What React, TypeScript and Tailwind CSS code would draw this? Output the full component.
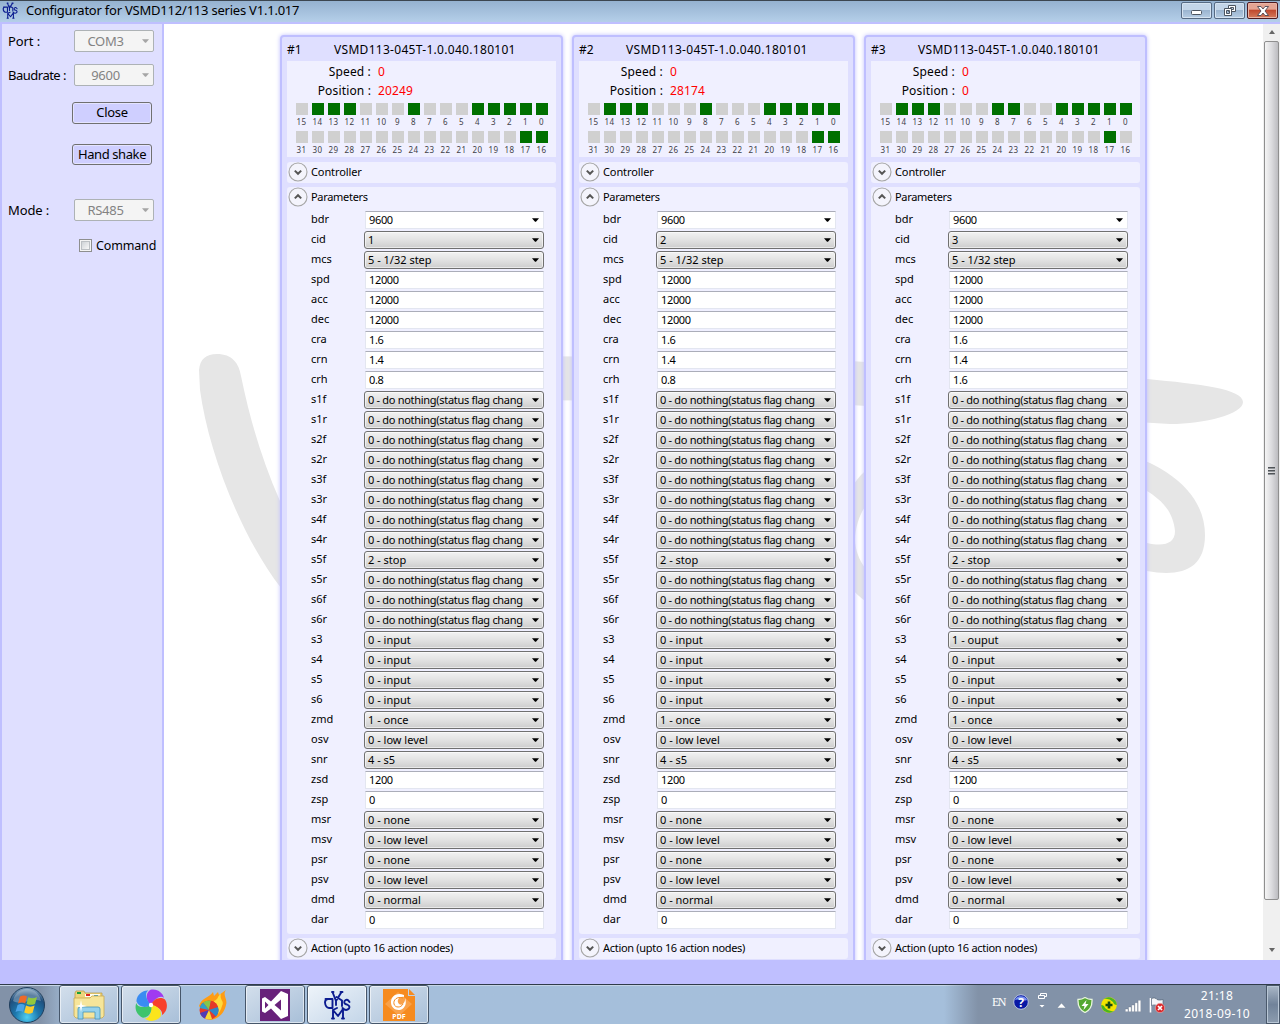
import React from 'react';

type Field = { name: string; values: [string, string, string]; kind: 'input' | 'select' | 'edit' };

const same = (v: string): [string, string, string] => [v, v, v];
const nothing = '0 - do nothing(status flag chang';
const f = (name: string, kind: Field['kind'], ...v: string[]): Field => ({
  name,
  kind,
  values: v.length === 3 ? [v[0], v[1], v[2]] : same(v[0]),
});

const fields: Field[] = [
  f('bdr', 'edit', '9600'),
  f('cid', 'select', '1', '2', '3'),
  f('mcs', 'select', '5 - 1/32 step'),
  f('spd', 'input', '12000'),
  f('acc', 'input', '12000'),
  f('dec', 'input', '12000'),
  f('cra', 'input', '1.6'),
  f('crn', 'input', '1.4'),
  f('crh', 'input', '0.8', '0.8', '1.6'),
  f('s1f', 'select', nothing),
  f('s1r', 'select', nothing),
  f('s2f', 'select', nothing),
  f('s2r', 'select', nothing),
  f('s3f', 'select', nothing),
  f('s3r', 'select', nothing),
  f('s4f', 'select', nothing),
  f('s4r', 'select', nothing),
  f('s5f', 'select', '2 - stop'),
  f('s5r', 'select', nothing),
  f('s6f', 'select', nothing),
  f('s6r', 'select', nothing),
  f('s3', 'select', '0 - input', '0 - input', '1 - ouput'),
  f('s4', 'select', '0 - input'),
  f('s5', 'select', '0 - input'),
  f('s6', 'select', '0 - input'),
  f('zmd', 'select', '1 - once'),
  f('osv', 'select', '0 - low level'),
  f('snr', 'select', '4 - s5'),
  f('zsd', 'input', '1200'),
  f('zsp', 'input', '0'),
  f('msr', 'select', '0 - none'),
  f('msv', 'select', '0 - low level'),
  f('psr', 'select', '0 - none'),
  f('psv', 'select', '0 - low level'),
  f('dmd', 'select', '0 - normal'),
  f('dar', 'input', '0'),
];

const devices = [
  { position: '20249', on: [14, 13, 12, 8, 4, 3, 2, 1, 0, 17, 16] },
  { position: '28174', on: [14, 13, 12, 8, 4, 3, 2, 1, 0, 17, 16] },
  { position: '0', on: [14, 13, 12, 8, 7, 4, 3, 2, 1, 0, 17] },
];

function DownTriangle({ className }: { className: string }) {
  return (
    <svg viewBox="0 0 8 4" className={className}>
      <path d="M0 0H8L4.5 4H3.5Z" fill="currentColor" />
    </svg>
  );
}

function Logo({ className }: { className: string }) {
  return (
    <svg viewBox="-1 -1 28 30" className={className} fill="none" stroke="#0c1c90" strokeWidth="1.9" strokeLinecap="round" strokeLinejoin="round">
      <path d="M8.500 8H4Q1 8 1 11.500Q1.500 16.500 5 17H8.500V8M3 8H1.500" />
      <path d="M8.500 1L12 10L17.500 1M8 1H9.500M16.500 1H18.500M12.500 6L18 9.500V15M12 10V14" />
      <path d="M9 27.500V19L14 25L19 18V27.500M8 27.500H10M18 27.500H20M9 19L13 17" />
      <path d="M25.500 11Q23 7 20.500 10Q19.500 13 23 13.500Q26.500 15 25 17.500Q22 20.500 18.500 17" />
    </svg>
  );
}

function BitRow({ start, on }: { start: number; on: number[] }) {
  return (
    <div className="flex h-7 gap-1">
      {Array.from({ length: 16 }, (_, i) => start - i).map((n) => (
        <div key={n} className="flex w-3 flex-col items-center">
          <div className={`h-3 w-3 shrink-0 ${on.includes(n) ? 'bg-[#007000]' : 'bg-[#d0d0d0]'}`} />
          <span className="mt-px text-[8px] leading-3 tracking-[0.3px] text-[#404048]">{n}</span>
        </div>
      ))}
    </div>
  );
}

function ExpanderHeader({ label, open, tight }: { label: string; open?: boolean; tight?: boolean }) {
  return (
    <div className="flex h-[21px] items-center">
      <svg viewBox="0 0 20 20" className="-mt-[5px] -mb-1 ml-px h-5 w-5 shrink-0" fill="none">
        <circle cx="10" cy="10" r="9" fill="#f4f4fc" stroke="#a6a6a6" strokeWidth="1.1" />
        <path d={open ? 'M6.8 11.4L10 8.2L13.2 11.4' : 'M6.8 8.6L10 11.8L13.2 8.6'} stroke="#555" strokeWidth="2" />
      </svg>
      <span className={`ml-[3px] text-[11px] ${tight ? 'tracking-[-0.3px]' : 'tracking-[-0.1px]'}`}>{label}</span>
    </div>
  );
}

function FieldBox({ kind, value }: { kind: Field['kind']; value: string }) {
  if (kind === 'select') {
    return (
      <div className="flex h-[18px] w-[180px] items-center justify-between rounded-[3px] border border-[#707070] bg-linear-to-b from-[#f2f2f2] from-0% via-[#e2e2e2] via-50% to-[#cdcdcd] pr-1 pl-[3px] shadow-[inset_0_0_0_1px_#ffffff90]">
        <span className={`text-[11px] leading-4 whitespace-nowrap ${value.length > 20 ? 'tracking-[-0.3px]' : ''}`}>{value}</span>
        <DownTriangle className="h-1 w-[7px] shrink-0" />
      </div>
    );
  }
  return (
    <div className="ml-px flex h-[18px] w-[179px] items-center justify-between border border-[#e3e6f0] border-t-[#abadb9] bg-white pr-1 pl-[3px]">
      <span className="text-[11px] leading-4 tracking-[-0.35px]">{value}</span>
      {kind === 'edit' && <DownTriangle className="h-1 w-[7px]" />}
    </div>
  );
}

function DevicePanel({ index }: { index: number }) {
  const d = devices[index];
  return (
    <section className="h-[940px] w-[283px] shrink-0 rounded-t-[4px] border-2 border-[#bfbfff] bg-[#dfdfff] px-[5px] shadow-[0_0_4px_#bfbfff]">
      <div className="flex h-6 items-center pt-[2px] text-[12px]">
        <span className="w-[47px]">#{index + 1}</span>
        <span className="tracking-[0.3px] whitespace-nowrap">VSMD113-045T-1.0.040.180101</span>
      </div>
      <div className="h-24 bg-[#f0f0ff]">
        <div className="grid grid-cols-[84px_1fr] gap-x-[7px] pt-px text-[12px] leading-[19px] tracking-[0.15px]">
          <span className="text-right">Speed :</span>
          <span className="text-[#ff0000]">0</span>
          <span className="text-right">Position :</span>
          <span className="text-[#ff0000]">{d.position}</span>
        </div>
        <div className="mt-[3px] ml-[8.5px]">
          <BitRow start={15} on={d.on} />
          <BitRow start={31} on={d.on} />
        </div>
      </div>
      <div className="mt-[5px] rounded-[3px] bg-[#f0f0ff]">
        <ExpanderHeader label="Controller" />
      </div>
      <div className="mt-1 h-[747px] rounded-[3px] bg-[#f0f0ff]">
        <ExpanderHeader label="Parameters" open tight />
        <div className="mt-[2px]">
          {fields.map((field) => (
            <div key={field.name} className="flex h-5 items-center">
              <span className="ml-6 w-[53px] pb-[2px] text-[11px] leading-4">{field.name}</span>
              <FieldBox kind={field.kind} value={field.values[index]} />
            </div>
          ))}
        </div>
      </div>
      <div className="mt-1 rounded-[3px] bg-[#f0f0ff]">
        <ExpanderHeader label="Action (upto 16 action nodes)" tight />
      </div>
    </section>
  );
}

function DisabledSelect({ value }: { value: string }) {
  return (
    <div className="flex h-[22px] w-20 items-center rounded-[2px] border border-[#adb2b5] bg-[#f4f4f4] text-[13px] text-[#838383]">
      <span className="w-[61px] pt-px text-center tracking-[-0.3px]">{value}</span>
      <DownTriangle className="ml-[6px] h-1 w-[7px] text-[#a5a5a5]" />
    </div>
  );
}

function Sidebar() {
  return (
    <aside className="h-[936px] w-[164px] shrink-0 border-x-2 border-[#bfbfff] bg-[#dfdfff] text-[13px]">
      <div className="mt-[6px] flex h-[22px] items-center">
        <span className="w-[72px] pt-[2px] pl-[6px] tracking-[-0.1px]">Port :</span>
        <DisabledSelect value="COM3" />
      </div>
      <div className="mt-3 flex h-[22px] items-center">
        <span className="w-[72px] pt-[2px] pl-[6px] tracking-[-0.5px] whitespace-nowrap">Baudrate :</span>
        <DisabledSelect value="9600" />
      </div>
      <button className="mt-4 ml-[70px] flex h-[22px] w-20 items-center justify-center rounded-[3px] border border-[#707070] bg-[#cfcfff] tracking-[-0.3px] shadow-[inset_0_0_0_1px_#e4e4ff]">Close</button>
      <button className="mt-5 ml-[70px] flex h-[21px] w-20 items-center justify-center rounded-[3px] border border-[#707070] bg-[#cfcfff] pt-px tracking-[-0.4px] whitespace-nowrap shadow-[inset_0_0_0_1px_#e4e4ff]">Hand shake</button>
      <div className="mt-[34px] flex h-[22px] items-center">
        <span className="w-[72px] pt-[2px] pl-[6px] tracking-[-0.1px]">Mode :</span>
        <DisabledSelect value="RS485" />
      </div>
      <div className="mt-[14px] ml-[77px] flex h-5 items-center">
        <span className="h-[13px] w-[13px] border border-[#8e8f8f] bg-[#f4f4f4] p-px">
          <span className="block h-full w-full border border-[#bcc0c4] bg-linear-to-br from-[#cfd3d7] to-[#f8f8f8]" />
        </span>
        <span className="ml-1 pt-[2px] text-[12.5px] tracking-[-0.15px]">Command</span>
      </div>
    </aside>
  );
}

function Watermark() {
  return (
    <svg viewBox="164 24 1099 936" className="absolute inset-0 h-full w-full" fill="#e6e6e6">
      <path d="M199 370C200 359 206 354 217 354C232 354 239 363 241 376C250 420 262 460 280 501L300 540V612L281 588C240 535 208 450 200 390Z" />
      <path d="M500 356L800 358L1147 379C1200 384 1243 389 1243 402C1243 414 1205 424 1170 424L800 402L500 400Z" />
      <path fillRule="evenodd" d="M900 455C868 458 838 490 838 540C838 580 856 606 900 615ZM900 480C872 490 856 512 855 540C856 560 868 580 900 590Z" />
      <path d="M1100 446C1170 462 1205 495 1205 535C1205 570 1180 577 1147 571L1100 555V530L1147 543C1165 547 1175 543 1175 531C1173 510 1160 499 1147 491L1100 476Z" />
    </svg>
  );
}

function Scrollbar() {
  return (
    <div className="flex h-full w-[17px] shrink-0 flex-col items-center bg-[#f0f0f0]">
      <svg viewBox="0 0 6 4" className="mt-[6px] h-1 w-[6px] shrink-0"><path d="M0 4L3 0L6 4Z" fill="#666" /></svg>
      <div className="mt-[7px] flex h-[859px] w-[15px] shrink-0 flex-col items-center justify-center gap-[2px] rounded-[2px] border border-[#8f8f8f] bg-linear-to-r from-[#f5f5f5] via-[#dcdcdf] to-[#bcbcc0]">
        {[0, 1, 2].map((i) => (
          <span key={i} className="h-px w-[7px] bg-[#505458] shadow-[0_1px_0_#909498]" />
        ))}
      </div>
      <svg viewBox="0 0 6 4" className="mt-12 h-1 w-[6px] shrink-0"><path d="M0 0L3 4L6 0Z" fill="#666" /></svg>
    </div>
  );
}

function TitleBar() {
  const btn = 'flex h-[17px] w-[31px] items-center justify-center rounded-[2px] border border-[#566a83] bg-linear-to-b from-[#c3d5e8] from-45% via-[#9bb5d0] via-50% to-[#b6cde4] shadow-[inset_0_0_0_1px_#d5e3f1]';
  return (
    <header className="flex h-[22px] items-start border-t border-[#3c4650] bg-linear-to-b from-[#95b2d0] to-[#b5cfe9]">
      <Logo className="mt-[1px] ml-[2px] h-[17px] w-[16px]" />
      <span className="ml-2 text-[13px] leading-[18px] tracking-[-0.22px]">Configurator for VSMD112/113 series V1.1.017</span>
      <div className="mt-px mr-[2px] ml-auto flex gap-[2px]">
        <span className={btn}>
          <svg viewBox="0 0 11 5" className="mt-1 h-[5px] w-[11px]"><rect x=".5" y=".5" width="10" height="4" rx="1" fill="#fff" stroke="#4c5560" /></svg>
        </span>
        <span className={btn}>
          <svg viewBox="0 0 12 11" className="h-[11px] w-3" fill="#fff" stroke="#4c5560">
            <path fillRule="evenodd" d="M4.5 .5H11.5V6.5H4.5ZM6.5 2.5H9.5V4.5H6.5Z" />
            <path fillRule="evenodd" d="M.5 3.5H7.5V10.5H.5ZM2.5 5.5H5.5V8.5H2.5Z" />
          </svg>
        </span>
        <span className="flex h-[17px] w-[31px] items-center justify-center rounded-[2px] border border-[#4f1a20] bg-linear-to-b from-[#e4a493] from-40% via-[#c04a30] via-50% to-[#d47a5c] shadow-[inset_0_0_0_1px_#e9b4a5]">
          <svg viewBox="0 0 12 10" className="h-[10px] w-3"><path d="M.5 .5H4L6 3L8 .5H11.5L8 5L11.5 9.5H8L6 7L4 9.5H.5L4 5Z" fill="#fff" stroke="#4c4550" strokeWidth=".9" /></svg>
        </span>
      </div>
    </header>
  );
}

function TaskButton({ children, active, plain }: { children: React.ReactNode; active?: boolean; plain?: boolean }) {
  const look = plain
    ? 'border-transparent'
    : active
      ? 'border-[#46566a] bg-linear-to-br from-[#eef4fa] to-[#c3d5e8] shadow-[inset_0_0_0_1px_#ffffffb0]'
      : 'border-[#46566a] bg-linear-to-br from-[#d3dfec] to-[#a8bfd8] shadow-[inset_0_0_0_1px_#ffffff90]';
  return <div className={`flex h-[39px] w-[60px] items-center justify-center rounded-[3px] border ${look}`}>{children}</div>;
}

function StartOrb() {
  return (
    <svg viewBox="0 0 38 38" className="ml-2 h-[38px] w-[38px] shrink-0">
      <defs>
        <radialGradient id="orb" cx=".5" cy=".85" r=".85">
          <stop offset="0" stopColor="#4fd0f4" />
          <stop offset=".4" stopColor="#1d78ad" />
          <stop offset=".75" stopColor="#1f4f7d" />
          <stop offset="1" stopColor="#8aa9c4" />
        </radialGradient>
      </defs>
      <circle cx="19" cy="19" r="17.5" fill="url(#orb)" stroke="#203e5c" />
      <path d="M5 15C7 5 15 3 19 3S31 5 33 15C24 11 14 20 5 15Z" fill="#fff" opacity=".28" />
      <path d="M12 10.5C14.500 9 17 9 19 10.500L17.200 17.500C15 16 12.500 16 10 17.500Z" fill="#ee6a28" />
      <path d="M20.300 11.300C23 12.500 26 12.500 29 11L27 18C24 19.300 21 19 18.500 18Z" fill="#92c83e" />
      <path d="M9.600 19C12 17.500 14.800 17.800 16.800 19L15 26C12.800 24.500 10 24.500 7.500 26Z" fill="#4aa3e6" />
      <path d="M18 19.600C20.700 21 23.700 21 26.600 19.500L24.600 26.700C21.800 28 18.800 28 16.200 26.500Z" fill="#fccb2b" />
    </svg>
  );
}

function Taskbar() {
  const petals = ['#a03af0', '#f8402c', '#fbe51c', '#3ec46c', '#3a8cf2'];
  return (
    <footer className="flex h-10 items-center border-t border-[#303c4a] bg-linear-to-r from-[#8292a8] from-[40px] to-[#a5bfdb] to-[72px] text-white shadow-[inset_0_1px_0_#c5d5e6]">
      <StartOrb />
      <div className="ml-[13px] flex gap-[2px]">
        <TaskButton>
          <svg viewBox="0 0 32 30" className="h-[30px] w-8">
            <path d="M2 3L3 1H11L12 3H29V10H2Z" fill="#eed47c" stroke="#b99840" strokeWidth=".7" />
            <path d="M4 2H8V4H4Z" fill="#18a038" /><path d="M12 4H27V7H12Z" fill="#fffef0" />
            <path d="M13 4H17V6H13Z" fill="#d22" /><path d="M21 5H25V7H21Z" fill="#39c" />
            <path d="M1 8H17L19 6H31V26L29 28H3L1 26Z" fill="#f6e59a" stroke="#c8a850" strokeWidth=".8" />
            <path d="M5 29V19Q5 17 7 17H25Q27 17 27 19V29H22V22H10V29Z" fill="#96d2ec" stroke="#4495bd" strokeWidth=".8" />
            <path d="M8 10L9 15L14 16L9 17L8 22L7 17L2 16L7 15Z" fill="#fff" />
          </svg>
        </TaskButton>
        <TaskButton>
          <svg viewBox="-16 -16 32 32" className="h-8 w-8">
            {petals.map((c, i) => (
              <path key={c} d="M0 0C-5 -4 -6 -11 -1 -15C6 -17 12 -12 13 -7C10 -10 4 -7 0 0Z" fill={c} transform={`rotate(${i * 72})`} />
            ))}
            <circle r="2.200" fill="#fff" />
          </svg>
        </TaskButton>
        <TaskButton plain>
          <svg viewBox="0 0 32 32" className="h-8 w-8">
            <path d="M2 17C5 8 12 9 16 3L17 7L21 3L22 6L29 1C25 6 31 10 29 16C27 25 21 30 13 31Z" fill="#ff9c13" />
            <path d="M17 12C22 10 20 7 24 5C22 11 28 12 25 17C24 21 22 24 20 26Z" fill="#ffdb3d" />
            <circle cx="12" cy="21" r="9.500" fill="#e53928" />
            <path d="M12 21L6 13.600A9.500 9.500 0 0 1 14 11.700Z" fill="#85c64a" />
            <path d="M12 21L14 11.700A9.500 9.500 0 0 1 21 18Z" fill="#e53928" />
            <path d="M12 21L21 18A9.500 9.500 0 0 1 19 27.500Z" fill="#2f86c8" />
            <path d="M12 21L2.700 19A9.500 9.500 0 0 1 6 13.600Z" fill="#2fa0c8" />
            <path d="M12 21L8 29.600A9.500 9.500 0 0 1 3 24Z" fill="#4e3bb5" />
            <path d="M12 21L15 30A9.500 9.500 0 0 1 8 29.600Z" fill="#f6d735" />
          </svg>
        </TaskButton>
        <TaskButton>
          <svg viewBox="0 0 30 32" className="h-8 w-[30px]">
            <rect width="30" height="32" fill="#68217a" />
            <path fillRule="evenodd" d="M21 2L28 5V27L21 30L11 19.500L5 24L2 22.500V9.500L5 8L11 12.500ZM21 10.500L14.500 16L21 21.500ZM5 12.500V19.500L8.500 16Z" fill="#fff" />
          </svg>
        </TaskButton>
        <TaskButton active>
          <Logo className="h-[30px] w-7" />
        </TaskButton>
        <TaskButton>
          <svg viewBox="0 0 32 32" className="h-8 w-8">
            <path d="M0 0H25V7H32V32H0Z" fill="#f68b1f" /><path d="M26 0L32 6H26Z" fill="#f68b1f" />
            <path d="M2 15L15 3L29 15L16 27Z" fill="#fbb165" opacity=".6" />
            <path d="M21 6C13 3 7.500 8 8 14C8.500 20 15 23 20 19.500C23 17 23.500 13 22 9C22.500 14 19 17 16 15C13 12 16 7 21 8Z" fill="#fff" />
            <path d="M20 9C14 7 10 11 11 15C12 19 18 19 20 15" stroke="#f68b1f" strokeWidth="1" fill="none" />
            <text x="16" y="30" fontSize="7" fontWeight="700" fill="#fff" textAnchor="middle">PDF</text>
          </svg>
        </TaskButton>
      </div>
      <div className="ml-auto flex h-full items-center bg-linear-to-r from-[#8292a800] to-[#8292a8] to-[34px] pl-[50px]">
        <span className="mr-[8px] -ml-[2px] -mt-[6px] font-['Liberation_Serif',serif] text-[12px] tracking-[-1.5px]">EN</span>
        <svg viewBox="0 0 16 16" className="-mt-[6px] h-4 w-4"><circle cx="8" cy="8" r="7.300" fill="#0919a5" stroke="#b8c4de" /><path d="M2 6C3 1 13 1 14 6C10 8 6 4 2 6Z" fill="#7790ee" /><text x="8" y="12.500" fontSize="12" fontWeight="700" fill="#fff" textAnchor="middle">?</text></svg>
        <svg viewBox="0 0 9 17" className="-mt-[8px] ml-[9px] h-[17px] w-[9px]" fill="none" stroke="#fff"><path d="M2.500 3V1.500H8.500V4.500H6.500M.5 3.500H6.500V6.500H.5Z" /><path d="M1.500 13H6.500L4 15.500Z" fill="#fff" stroke="none" /></svg>
        <svg viewBox="0 0 9 5" className="mt-[2px] ml-[10px] h-[5px] w-[9px]"><path d="M0 5L4.500 0L9 5Z" fill="#fff" stroke="#596a80" strokeWidth=".4" /></svg>
        <svg viewBox="0 0 16 16" className="ml-[11px] h-4 w-4"><path d="M8 .5Q11 2.500 15 2.500Q15.500 12 8 15.500Q.5 12 1 2.500Q5 2.500 8 .5Z" fill="#55a832" stroke="#e7f5dc" strokeWidth="1.300" /><path d="M9.500 3L4.500 9H7.500L6.500 13L11.500 7H8.500Z" fill="#fff" /></svg>
        <svg viewBox="0 0 16 16" className="ml-[8px] h-4 w-4"><circle cx="8" cy="8" r="7.800" fill="#f4e500" /><path d="M3 2A8 8 0 0 1 15.800 8A4 4 0 0 1 12 5Q8 1 3 2ZM13 14A8 8 0 0 1 .2 8A4 4 0 0 1 4 11Q8 15 13 14Z" fill="#4ab520" /><path d="M8 4.500V11.500M4.500 8H11.500" stroke="#164b12" strokeWidth="2.600" /></svg>
        <svg viewBox="0 0 16 12" className="mt-[2px] ml-2 h-3 w-4" fill="#fff" stroke="#566478" strokeWidth=".3"><path d="M.3 9H3V11.700H.3ZM3.500 7H6.200V11.700H3.500ZM6.700 5H9.400V11.700H6.700ZM9.900 2.700H12.600V11.700H9.900ZM13.100 .3H15.800V11.700H13.100Z" /></svg>
        <svg viewBox="0 0 16 16" className="mt-px ml-2 h-4 w-4"><path d="M1.500 1V15.500" stroke="#fff" strokeWidth="1.600" /><path d="M2.500 1.500C5 .5 7 1 8 2.500C10 3.500 12 3 14 2.500V9C11 10 9 9.500 7.500 8.500C6 7.500 4 8 2.500 8.500Z" fill="#f4f6f9" stroke="#48586c" strokeWidth=".6" /><circle cx="11" cy="11" r="4.700" fill="#d9272a" stroke="#f3b4b0" strokeWidth=".6" /><path d="M9 9L13 13M13 9L9 13" stroke="#fff" strokeWidth="1.700" /></svg>
        <div className="ml-[19px] flex w-[66px] flex-col items-center text-[12px] leading-[18px] tracking-[0.35px] whitespace-nowrap">
          <span>21:18</span>
          <span>2018-09-10</span>
        </div>
        <div className="ml-4 h-full w-[14px] border border-[#49586b] bg-linear-to-b from-[#aab8c8] via-[#71839a] to-[#8c9caf] shadow-[inset_0_0_0_1px_#b9c7d6]" />
      </div>
    </footer>
  );
}

export default function App() {
  return (
    <div className="flex h-[1024px] w-[1280px] flex-col overflow-hidden bg-[#bfbfff] font-['Noto_Sans',sans-serif] text-black">
      <TitleBar />
      <div className="mt-[2px] flex h-[936px] shrink-0">
        <Sidebar />
        <main className="relative h-full w-[1099px] shrink-0 overflow-hidden bg-white">
          <Watermark />
          <div className="relative flex gap-[9px] pt-[11px] pl-[116px]">
            {[0, 1, 2].map((i) => (
              <DevicePanel key={i} index={i} />
            ))}
          </div>
        </main>
        <Scrollbar />
      </div>
      <div className="h-6 shrink-0" />
      <Taskbar />
    </div>
  );
}
